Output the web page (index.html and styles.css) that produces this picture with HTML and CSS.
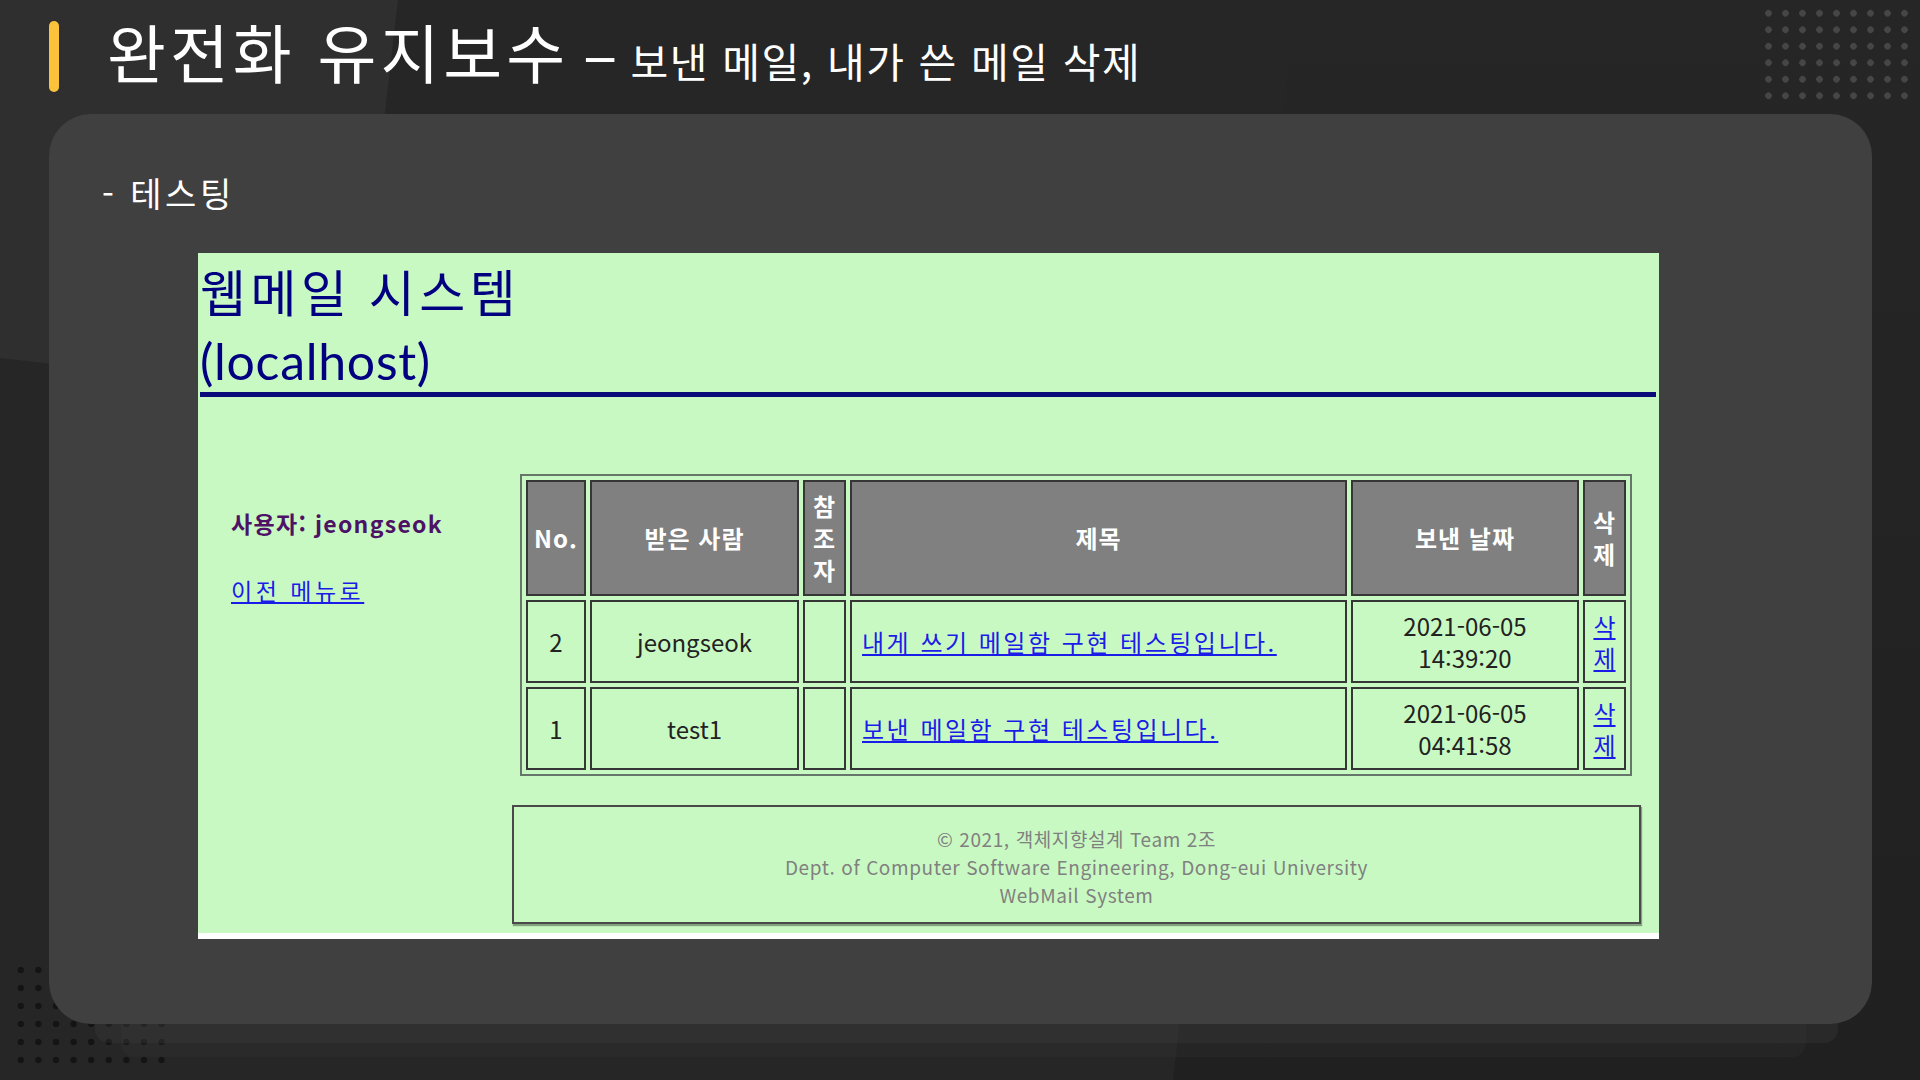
FILE: index.html
```html
<!DOCTYPE html>
<html lang="ko">
<head>
<meta charset="utf-8">
<title>완전화 유지보수</title>
<link rel="stylesheet" href="styles.css">
</head>
<body>
<div class="slide">
  <div class="deco deco-b"></div>
  <div class="deco deco-a"></div>
  <div class="deco dots dots-tr"></div>
  <div class="deco dots dots-bl"></div>
  <div class="deco stack stack-2"></div>
  <div class="deco stack stack-1"></div>

  <header class="slide-head">
    <span class="accent"></span>
    <div class="title-wrap">
      <h1 class="title">완전화 유지보수</h1>
      <span class="dash">–</span>
      <span class="subtitle">보낸 메일, 내가 쓴 메일 삭제</span>
    </div>
  </header>

  <main class="card">
    <p class="section"><span class="section-dash">-</span>테스팅</p>
    <div class="shot">
      <h2 class="shot-title"><span class="shot-name">웹메일 시스템</span><span class="shot-host">(localhost)</span></h2>
      <div class="shot-body">
        <aside class="side">
          <p class="user">사용자: jeongseok</p>
          <a class="back" href="#">이전 메뉴로</a>
        </aside>
        <section class="main">
          <table class="mail">
            <colgroup>
              <col class="c-no"><col class="c-to"><col class="c-cc"><col class="c-subj"><col class="c-date"><col class="c-del">
            </colgroup>
            <thead>
              <tr>
                <th>No.</th>
                <th>받은 사람</th>
                <th>참조자</th>
                <th>제목</th>
                <th>보낸 날짜</th>
                <th>삭제</th>
              </tr>
            </thead>
            <tbody>
              <tr>
                <td>2</td>
                <td>jeongseok</td>
                <td></td>
                <td class="subj"><a href="#">내게 쓰기 메일함 구현 테스팅입니다.</a></td>
                <td>2021-06-05<br>14:39:20</td>
                <td class="del"><a href="#">삭제</a></td>
              </tr>
              <tr>
                <td>1</td>
                <td>test1</td>
                <td></td>
                <td class="subj"><a href="#">보낸 메일함 구현 테스팅입니다.</a></td>
                <td>2021-06-05<br>04:41:58</td>
                <td class="del"><a href="#">삭제</a></td>
              </tr>
            </tbody>
          </table>
          <footer class="foot">
            © 2021, 객체지향설계 Team 2조<br>
            Dept. of Computer Software Engineering, Dong-eui University<br>
            WebMail System
          </footer>
        </section>
      </div>
    </div>
  </main>
</div>
</body>
</html>
```

FILE: styles.css
```css
* { box-sizing: border-box; }
html, body { margin: 0; padding: 0; }
body {
  width: 1920px;
  height: 1080px;
  overflow: hidden;
  background: #202020;
  font-family: "Noto Sans CJK KR", "Noto Sans", sans-serif;
}

.slide {
  position: relative;
  width: 1920px;
  height: 1080px;
  overflow: hidden;
  background: linear-gradient(180deg, #262626 0, #242424 400px, #202020 1080px);
}

/* decorative background */
.deco { position: absolute; }
.deco-b {
  left: 0; top: 0; width: 1920px; height: 1080px;
  background: #262626;
  clip-path: polygon(0 0, 1297px 0, 1173px 1080px, 0 1080px);
}
.deco-a {
  left: 0; top: 0; width: 420px; height: 420px;
  background: #2f2f2f;
  clip-path: polygon(0 0, 398px 0, 352px 398px, 0 358px);
}
.dots-tr {
  left: 1760px; top: 5px; width: 153px; height: 99px;
  background-image: radial-gradient(circle at center, #464646 0 3px, transparent 3.6px);
  background-size: 17px 16.5px;
}
.dots-bl {
  left: 12px; top: 961px; width: 159px; height: 108px;
  background-image: radial-gradient(circle at center, #141414 0 3px, transparent 3.6px);
  background-size: 17.6px 18px;
}
.stack { border-radius: 0 0 14px 14px; }
.stack-1 {
  left: 95px; top: 300px; width: 1743px; height: 743px;
  background: rgba(72, 72, 72, 0.22);
}
.stack-2 {
  left: 121px; top: 300px; width: 1685px; height: 757px;
  background: rgba(72, 72, 72, 0.14);
}

/* slide header */
.slide-head {
  position: relative;
  display: flex;
  align-items: flex-start;
  height: 114px;
  padding: 21px 0 0 49px;
}
.accent {
  flex: none;
  width: 10px;
  height: 71px;
  border-radius: 5px;
  background: #fbc33b;
}
.title-wrap {
  display: flex;
  align-items: baseline;
  margin: -3px 0 0 48px;
  color: #fff;
}
.title {
  margin: 0;
  font-size: 64px;
  font-weight: 400;
  line-height: 64px;
  letter-spacing: 4px;
  white-space: nowrap;
}
.dash {
  margin-left: 14px;
  font-size: 64px;
  line-height: 64px;
}
.subtitle {
  margin-left: 13px;
  font-size: 41px;
  font-weight: 400;
  letter-spacing: 1.6px;
  white-space: nowrap;
}

/* card */
.card {
  position: relative;
  display: flex;
  flex-direction: column;
  align-items: flex-start;
  margin-left: 49px;
  width: 1823px;
  height: 910px;
  padding-top: 58px;
  border-radius: 42px;
  background: #404040;
}
.section {
  margin: 0 0 0 53px;
  height: 41px;
  font-size: 34px;
  line-height: 41px;
  letter-spacing: 3.5px;
  color: #fff;
  white-space: nowrap;
}
.section-dash { margin-right: 13px; }

/* webmail screenshot */
.shot {
  display: flex;
  flex-direction: column;
  margin: 40px 0 0 149px;
  width: 1461px;
  height: 686px;
  background: #c9f9c3;
  border-bottom: 6px solid #ffffff;
}
.shot-title {
  margin: 9px 3px 0 2px;
  padding-bottom: 4px;
  border-bottom: 5px solid #0a0a78;
  font-family: Lato, "Noto Sans CJK KR", sans-serif;
  font-size: 50px;
  font-weight: 400;
  line-height: 63px;
  color: #000080;
}
.shot-name, .shot-host { display: block; }
.shot-name {
  height: 68px;
  letter-spacing: 4.5px;
}
.shot-host {
  height: 58px;
  letter-spacing: 0.7px;
}
.shot-body {
  display: flex;
  align-items: flex-start;
}
.side {
  flex: none;
  width: 314px;
  padding: 111px 0 0 33px;
}
.user {
  margin: 0;
  font-size: 23px;
  font-weight: 700;
  line-height: 30px;
  letter-spacing: 1.3px;
  color: #4d1266;
}
.back {
  display: inline-block;
  margin-top: 37px;
  font-size: 23px;
  line-height: 30px;
  letter-spacing: 3.5px;
  color: #1c1ce8;
  text-decoration: underline;
}
.main {
  flex: none;
  width: 1129px;
  padding-top: 77px;
}
.mail {
  margin: 0 9px 0 8px;
  width: 1112px;
  table-layout: fixed;
  border-collapse: separate;
  border-spacing: 4px;
  border: 2px solid #66766a;
}
.c-no { width: 60px; }
.c-to { width: 209px; }
.c-cc { width: 43px; }
.c-subj { width: 497px; }
.c-date { width: 228px; }
.c-del { width: 43px; }
.mail th, .mail td {
  padding: 0;
  border: 2px solid #363636;
  text-align: center;
  vertical-align: middle;
  font-size: 24px;
  line-height: 32px;
  color: #222;
}
.mail th {
  height: 116px;
  background: #808080;
  color: #fff;
  font-weight: 700;
  letter-spacing: 1px;
}
.mail td { height: 83px; }
.mail td.subj {
  text-align: left;
  padding-left: 10px;
  letter-spacing: 2.5px;
}
.mail a {
  color: #1c1ce8;
  text-decoration: underline;
}
.foot {
  margin-top: 29px;
  width: 1129px;
  height: 119px;
  padding-top: 18px;
  border: 2px solid #4a4a4a;
  box-shadow: 1px 2px 1px rgba(0, 0, 0, 0.35);
  text-align: center;
  font-size: 19px;
  line-height: 28px;
  letter-spacing: 0.6px;
  color: #808080;
}
```
